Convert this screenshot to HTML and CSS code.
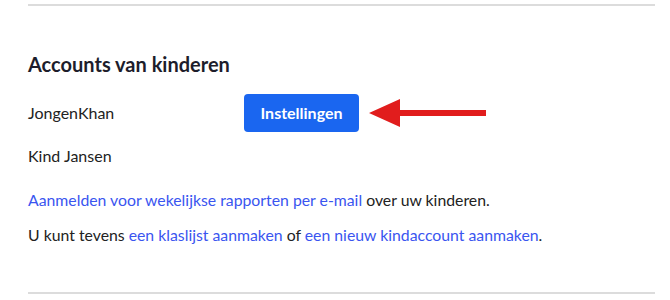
FILE: index.html
```html
<!DOCTYPE html>
<html lang="nl">
<head>
    <meta charset="UTF-8">
    <title>Accounts van kinderen</title>
    <link rel="stylesheet" href="styles.css">
</head>
<body>
    <div class="section">
        <hr class="divider">
        <h2>Accounts van kinderen</h2>
        <div class="child-row">
            <span class="child-name">JongenKhan</span>
            <button class="settings-btn">Instellingen</button>
            <svg class="arrow" width="118" height="32" viewBox="0 0 118 32">
                <polygon points="0,16 31,2 31,13 117,13 117,19 31,19 31,30" fill="#e11d1d"/>
            </svg>
        </div>
        <div class="child-row">
            <span class="child-name">Kind Jansen</span>
        </div>
        <p class="note"><a href="#">Aanmelden voor wekelijkse rapporten per e-mail</a> over uw kinderen.</p>
        <p class="note">U kunt tevens <a href="#">een klaslijst aanmaken</a> of <a href="#">een nieuw kindaccount aanmaken</a>.</p>
        <hr class="divider bottom">
    </div>
</body>
</html>
```

FILE: styles.css
```css
body {
    margin: 0;
    font-family: Lato, "Open Sans", sans-serif;
    color: #222;
    background: #fff;
}
.section {
    padding: 4px 15px 0 28px;
}
.divider {
    border: none;
    border-top: 2px solid #dcdcdc;
    margin: 0;
}
.divider.bottom {
    margin-top: 48px;
}
h2 {
    font-size: 20px;
    font-weight: 700;
    color: #1d1d2b;
    margin: 46px 0 15px;
}
.child-row {
    display: flex;
    align-items: center;
    height: 43px;
}
.child-name {
    width: 216px;
    font-size: 16px;
}
.settings-btn {
    font-family: inherit;
    font-size: 16px;
    font-weight: 700;
    color: #fff;
    background: #1a66f0;
    border: none;
    border-radius: 4px;
    padding: 0 16px;
    height: 38px;
    width: 115px;
}
.arrow {
    margin-left: 10px;
}
.note {
    font-size: 15.8px;
    margin: 13px 0 0;
}
.note + .note {
    margin-top: 16px;
}
.note a {
    color: #3a55f0;
    text-decoration: none;
}
```
